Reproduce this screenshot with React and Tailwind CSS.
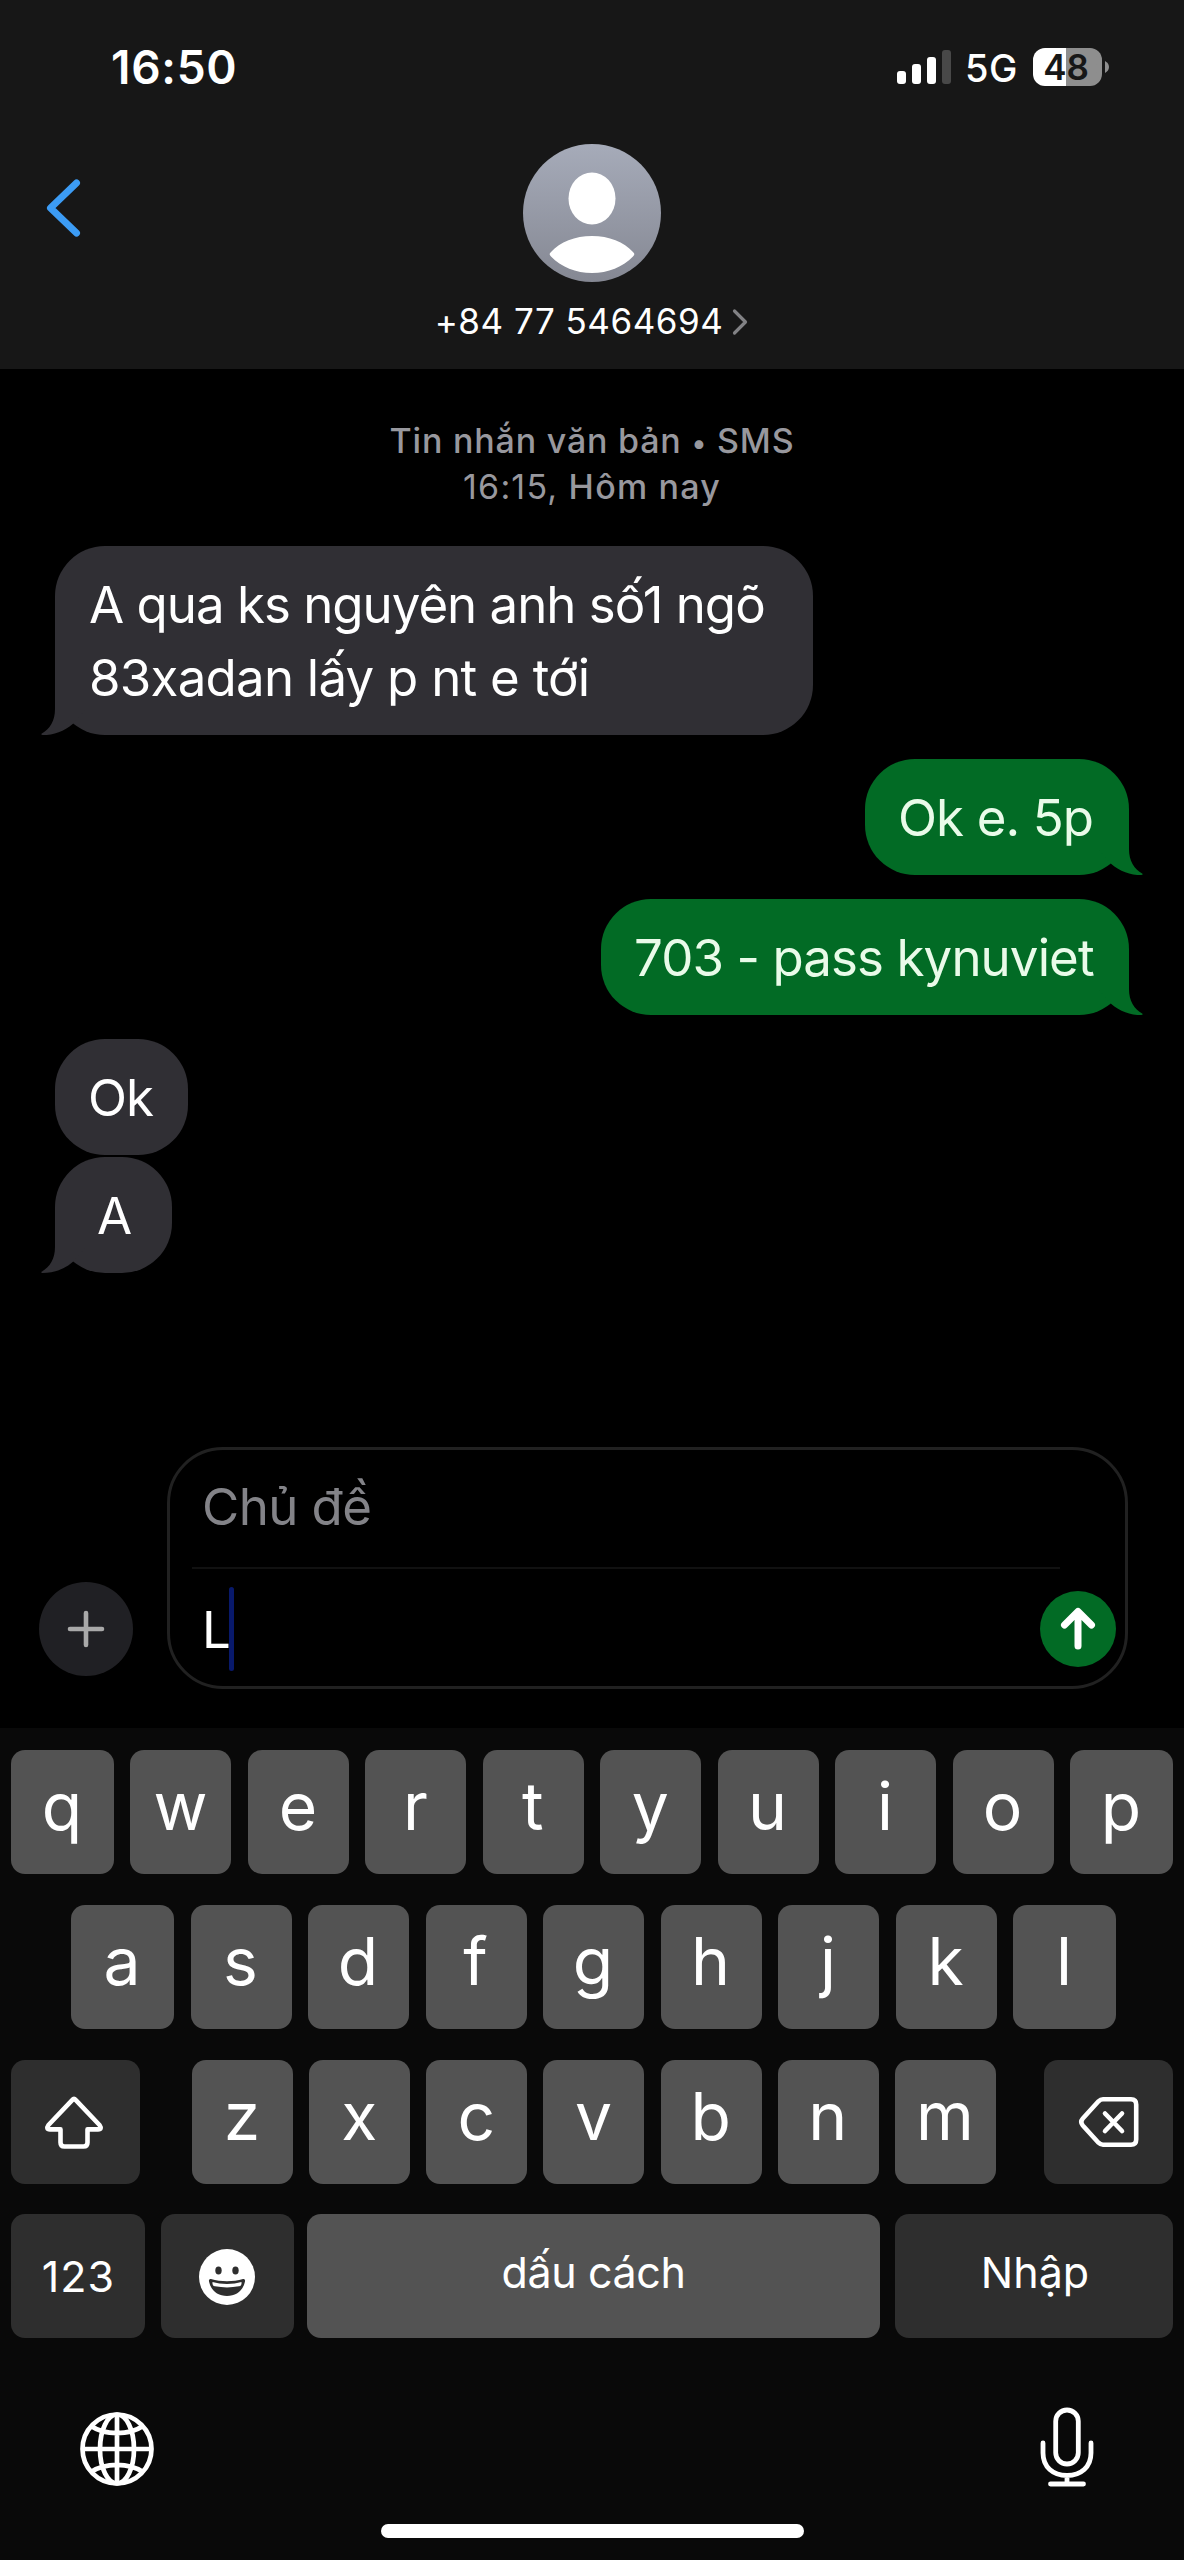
import React from "react";

function SignalBars() {
  return (
    <div className="flex h-[34px] items-end gap-[6px]">
      <span className="h-[13px] w-[9px] rounded-[3px] bg-white" />
      <span className="h-[20px] w-[9px] rounded-[3px] bg-white" />
      <span className="h-[27px] w-[9px] rounded-[3px] bg-white" />
      <span className="h-[34px] w-[9px] rounded-[3px] bg-[#484848]" />
    </div>
  );
}

function Battery() {
  return (
    <div className="flex items-center">
      <div className="flex h-[38px] w-[69px] items-center justify-center rounded-[12px] bg-linear-to-r from-white from-[48%] to-[#8e8e8e] to-[48%] pr-[3px] text-[35px] font-semibold leading-[38px] text-[#171717]">
        48
      </div>
      <svg className="ml-[3px] h-[12px] w-[4px]" viewBox="0 0 4 12" fill="#8e8e8e">
        <path d="M0 0C2.5 1.4 4 3.4 4 6S2.5 10.6 0 12Z" />
      </svg>
    </div>
  );
}

function StatusBar() {
  return (
    <div className="flex h-[134px] items-center justify-between pl-[111px] pr-[75px] text-white">
      <span className="text-[46px] font-semibold leading-[60px] tracking-[0.7px]">16:50</span>
      <div className="flex items-center">
        <SignalBars />
        <span className="ml-[14px] mr-[15px] mt-[2px] text-[38px] font-medium leading-[40px] tracking-[0.5px]">5G</span>
        <Battery />
      </div>
    </div>
  );
}

function Avatar() {
  return (
    <svg className="h-[138px] w-[138px]" viewBox="0 0 138 138">
      <defs>
        <linearGradient id="avatar" x1="0" y1="0" x2="0" y2="1">
          <stop offset="0" stopColor="#a6abb9" />
          <stop offset="1" stopColor="#858893" />
        </linearGradient>
      </defs>
      <circle cx="69" cy="69" r="69" fill="url(#avatar)" />
      <ellipse cx="69" cy="54.5" rx="23.5" ry="26" fill="#fff" />
      <path d="M28 108C37 98 52 92 69 92s32 6 41 16c2 2 1.500 3 0 4.500C100 123 85 129 69 129s-31-6-41-16.500C26.500 111 26 110 28 108Z" fill="#fff" />
    </svg>
  );
}

function Header() {
  return (
    <header className="h-[369px] bg-[#171717]">
      <StatusBar />
      <div className="grid grid-cols-[1fr_auto_1fr] pt-[10px]">
        <svg className="ml-[45px] mt-[33px] h-[62px] w-[38px]" viewBox="0 0 38 62" fill="none" stroke="#3c9cf5" strokeWidth="7" strokeLinecap="round" strokeLinejoin="round">
          <path d="M31.500 6L5.500 31L31.500 56" />
        </svg>
        <div className="flex w-[340px] flex-col items-center">
          <Avatar />
          <div className="mt-[17px] flex items-center">
            <span className="text-[35px] leading-[44px] tracking-[0.5px] text-white">+84 77 5464694</span>
            <svg className="ml-[9px] mt-[2px] h-[28px] w-[17px]" viewBox="0 0 17 28" fill="none" stroke="#828285" strokeWidth="3.200" strokeLinecap="round" strokeLinejoin="round">
              <path d="M2.500 3L13.500 14L2.500 25" />
            </svg>
          </div>
        </div>
      </div>
    </header>
  );
}

function Tail({ side }) {
  return (
    <svg
      className={
        side === "right"
          ? "absolute -right-[14px] bottom-0 h-[60px] w-[44px] -scale-x-100 text-[#026b25]"
          : "absolute -left-[14px] bottom-0 h-[60px] w-[44px] text-[#302f34]"
      }
      viewBox="-14 -60 44 60"
      fill="currentColor"
    >
      <path d="M0-60V-26C0-14-5-6-13.500-1.200C-14-.600-13.500 0-12.500 0C-1 0 9-3.500 18-11.300L30-25V-60Z" />
    </svg>
  );
}

function Bubble({ className, sent, tail, children }) {
  return (
    <div
      className={
        (sent ? "self-end bg-[#026b25] text-[#e9fbe9] " : "self-start bg-[#302f34] text-white ") +
        "relative whitespace-nowrap rounded-[50px] py-[21.5px] text-[51px] leading-[73px] tracking-[-0.9px] " +
        className
      }
    >
      {tail && <Tail side={sent ? "right" : "left"} />}
      <div className="relative">{children}</div>
    </div>
  );
}

function Conversation() {
  return (
    <main className="flex h-[1078px] flex-col px-[55px] pt-[49px]">
      <div className="text-center text-[34px] font-medium leading-[46px] text-[#98989e]">
        <p className="h-[46px] tracking-[0.8px]">
          Tin nhắn văn bản <span className="text-[28px] leading-none">•</span> SMS
        </p>
        <p className="tracking-[1.2px]">
          <span className="font-normal">16:15,</span> Hôm nay
        </p>
      </div>
      <div className="mt-[36px] flex flex-col">
        <Bubble tail className="w-[758px] pl-[34px]">
          <p className="tracking-[-1px]">A qua ks nguyên anh số1 ngõ</p>
          <p className="tracking-[-0.75px]">83xadan lấy p nt e tới</p>
        </Bubble>
        <Bubble sent tail className="mt-[24px] w-[264px] pl-[33px]">Ok e. 5p</Bubble>
        <Bubble sent tail className="mt-[24px] w-[528px] pl-[33px]">703 - pass kynuviet</Bubble>
        <Bubble className="mt-[24px] w-[133px] pl-[33px]">Ok</Bubble>
        <Bubble tail className="mt-[2px] w-[117px] pl-[42px]">A</Bubble>
      </div>
    </main>
  );
}

function Composer() {
  return (
    <div className="flex h-[281px] items-end justify-between pb-[39px] pl-[39px] pr-[56px]">
      <button className="mb-[13px] flex h-[94px] w-[94px] items-center justify-center rounded-full bg-[#202024] pr-px">
        <svg className="h-[40px] w-[40px]" viewBox="0 0 40 40" stroke="#a9a9a9" strokeWidth="4.600" strokeLinecap="round">
          <path d="M20 4V36M4 20H36" />
        </svg>
      </button>
      <div className="flex h-[242px] w-[961px] flex-col rounded-[56px] border-[3px] border-[#212121]">
        <p className="mx-[22px] h-[119px] w-[868px] border-b-2 border-[#111] pl-[10px] pt-[20px] text-[51px] leading-[73px] tracking-[-0.6px] text-[#838388]">
          Chủ đề
        </p>
        <div className="flex flex-1 items-center justify-between pl-[32px] pr-[9px] pt-[3px]">
          <p className="flex items-center text-[51px] leading-[73px] text-white">
            L
            <span className="-ml-[2px] h-[84px] w-[5px] rounded-full bg-[#08196b]" />
          </p>
          <button className="flex h-[76px] w-[76px] items-center justify-center rounded-full bg-[#026b25]">
            <svg className="h-[46px] w-[40px]" viewBox="0 0 40 46" fill="none" stroke="#fff" strokeWidth="7" strokeLinecap="round" strokeLinejoin="round">
              <path d="M20 40V6M6.500 19L20 5.500L33.500 19" />
            </svg>
          </button>
        </div>
      </div>
    </div>
  );
}

function LetterKey({ char, wide }) {
  return (
    <button
      className={
        (wide ? "w-[103px] " : "w-[101px] ") +
        "flex h-[124px] items-center justify-center rounded-[14px] bg-[#535353] pb-[13px] pr-px text-[66px] leading-[80px] text-white"
      }
    >
      {char}
    </button>
  );
}

function DarkKey({ className, children }) {
  return (
    <button className={"flex h-[124px] items-center justify-center rounded-[14px] bg-[#2e2e2e] text-[43px] leading-[60px] text-white " + className}>
      {children}
    </button>
  );
}

function ShiftIcon() {
  return (
    <svg className="h-[56px] w-[64px]" viewBox="0 0 64 56" fill="none" stroke="#fff" strokeWidth="4.600" strokeLinejoin="round">
      <path d="M30.400 4.800Q32 3 33.600 4.800L57.500 30Q60.500 34.400 56 34.400H45.500V47.500Q45.500 51.500 41.500 51.500H22.500Q18.500 51.500 18.500 47.500V34.400H8Q3.500 34.400 6.500 30Z" />
    </svg>
  );
}

function DeleteIcon() {
  return (
    <svg className="h-[52px] w-[62px]" viewBox="0 0 62 52" fill="none" stroke="#fff" strokeWidth="4.600" strokeLinecap="round" strokeLinejoin="round">
      <path d="M25 3.300H53Q58.200 3.300 58.200 8.500V43.500Q58.200 48.700 53 48.700H25Q22.500 48.700 20.500 46.700L4.800 29.500Q1.800 26 4.800 22.500L20.500 5.300Q22.500 3.300 25 3.300Z" />
      <path d="M27 17.500L44 35M44 17.500L27 35" />
    </svg>
  );
}

function EmojiIcon() {
  return (
    <svg className="h-[56px] w-[56px]" viewBox="0 0 56 56">
      <circle cx="28" cy="28" r="28" fill="#fff" />
      <g fill="#2e2e2e">
        <ellipse cx="19.500" cy="21.500" rx="3.200" ry="3.900" />
        <ellipse cx="36.500" cy="21.500" rx="3.200" ry="3.900" />
        <path d="M12 30C22 33 34 33 44 30Q46.500 29.500 46 32.500C44 42 37 47 28 47S12 42 10 32.500Q9.500 29.500 12 30Z" />
      </g>
      <path d="M13.500 33C22 35.500 34 35.500 42.500 33Q43 37 40 37.300C32 38.800 24 38.800 16 37.300Q13 37 13.500 33Z" fill="#fff" />
    </svg>
  );
}

function GlobeIcon() {
  return (
    <svg className="h-[76px] w-[76px]" viewBox="0 0 76 76" fill="none" stroke="#fff" strokeWidth="4.700">
      <circle cx="38" cy="38" r="34.500" />
      <ellipse cx="38" cy="38" rx="17" ry="34.500" />
      <path d="M38 3V73M3 38H73M12 15C26 24.500 50 24.500 64 15M12 61C26 51.500 50 51.500 64 61" />
    </svg>
  );
}

function MicIcon() {
  return (
    <svg className="h-[80px] w-[54px]" viewBox="0 0 54 80" fill="none" stroke="#fff" strokeWidth="4.800" strokeLinecap="round">
      <rect x="15.700" y="3" width="22.600" height="54" rx="11.300" />
      <path d="M3 36V46C3 60 13 68.500 27 68.500S51 60 51 46V36M27 69V77M10.500 77H43.500" />
    </svg>
  );
}

function Keyboard() {
  const top = "qwertyuiop".split("");
  const home = "asdfghjkl".split("");
  const bottom = "zxcvbnm".split("");
  return (
    <div className="flex h-[832px] flex-col bg-[#090909] px-[11px] pt-[22px]">
      <div className="flex justify-between">
        {top.map((c, i) => (
          <LetterKey key={c} char={c} wide={i === 0 || i === 9} />
        ))}
      </div>
      <div className="mt-[31px] flex justify-between pl-[60px] pr-[57px]">
        {home.map((c, i) => (
          <LetterKey key={c} char={c} wide={i === 0 || i === 8} />
        ))}
      </div>
      <div className="mt-[31px] flex justify-between">
        <DarkKey className="w-[129px] pr-[3px] pt-[2px]">
          <ShiftIcon />
        </DarkKey>
        <div className="ml-[4px] flex w-[804px] justify-between">
          {bottom.map((c) => (
            <LetterKey key={c} char={c} />
          ))}
        </div>
        <DarkKey className="w-[129px]">
          <DeleteIcon />
        </DarkKey>
      </div>
      <div className="mt-[30px] flex">
        <DarkKey className="w-[134px] pl-[1px] tracking-[1.100px]">123</DarkKey>
        <DarkKey className="ml-[16px] w-[133px] pr-[2px] pt-[2px]">
          <EmojiIcon />
        </DarkKey>
        <button className="ml-[13px] flex h-[124px] w-[573px] items-center justify-center rounded-[14px] bg-[#535353] pb-[8px] text-[43px] leading-[60px] tracking-[-0.4px] text-white">
          dấu cách
        </button>
        <DarkKey className="ml-[15px] w-[278px] pb-[8px] pl-[2px]">Nhập</DarkKey>
      </div>
      <div className="mt-[69px] flex h-[80px] items-center justify-between pl-[68px] pr-[79px]">
        <div className="pt-[3px]">
          <GlobeIcon />
        </div>
        <MicIcon />
      </div>
      <div className="mt-[37px] h-[14px] w-[423px] self-center rounded-full bg-white" />
    </div>
  );
}

export default function App() {
  return (
    <div className="h-[2560px] w-[1184px] overflow-hidden bg-black font-[Inter,'Liberation_Sans',sans-serif]">
      <Header />
      <Conversation />
      <Composer />
      <Keyboard />
    </div>
  );
}
